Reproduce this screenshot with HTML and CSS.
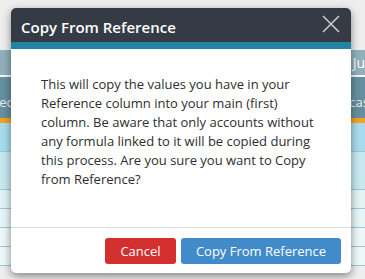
FILE: index.html
```html
<!DOCTYPE html>
<html lang="en">
<head>
    <meta charset="UTF-8">
    <meta name="viewport" content="width=device-width, initial-scale=1.0">
    <title>Copy From Reference</title>
    <link rel="stylesheet" href="styles.css">
</head>
<body>
    <div class="page">
        <div class="top-space"></div>
        <div class="grid-head">
            <span class="head-left"></span>
            <span class="head-right">Ju</span>
        </div>
        <div class="grid-sub">
            <span class="sub-left">rec</span>
            <span class="sub-right">cas</span>
        </div>
        <div class="orange-bar"></div>
        <div class="grid-row row-1"></div>
        <div class="grid-row row-2"></div>
        <div class="grid-row row-3"></div>
        <div class="grid-row row-4"></div>
        <div class="grid-row row-5"></div>
        <div class="grid-row row-6"></div>
    </div>

    <div class="modal">
        <div class="modal-header">
            <h2 class="modal-title">Copy From Reference</h2>
            <button class="modal-close" aria-label="Close">
                <svg width="18" height="18" viewBox="0 0 18 18">
                    <path d="M1 1 L17 17 M17 1 L1 17" stroke="#c9ccd1" stroke-width="1.6" fill="none"/>
                </svg>
            </button>
        </div>
        <div class="modal-stripe"></div>
        <div class="modal-body">
            <p>This will copy the values you have in your Reference column into your main (first) column. Be aware that only accounts without any formula linked to it will be copied during this process. Are you sure you want to Copy from Reference?</p>
        </div>
        <div class="modal-footer">
            <button class="btn btn-cancel">Cancel</button>
            <button class="btn btn-copy">Copy From Reference</button>
        </div>
    </div>
</body>
</html>
```

FILE: styles.css
```css
body {
    margin: 0;
    font-family: "Open Sans", Arial, sans-serif;
    background-color: #eeeeee;
    width: 365px;
    height: 279px;
    overflow: hidden;
    position: relative;
}

.page {
    display: flex;
    flex-direction: column;
}

.top-space {
    height: 50px;
    background-color: #eeeeee;
}

.grid-head {
    height: 25px;
    background-color: #8fb0bc;
    border-bottom: 2px solid #f4f6f7;
    display: flex;
    justify-content: space-between;
    align-items: center;
    color: #ffffff;
    font-size: 14px;
}

.head-right {
    padding-right: 0;
}

.grid-sub {
    height: 41px;
    background-color: #66909f;
    display: flex;
    justify-content: space-between;
    align-items: flex-end;
    padding-bottom: 7px;
    box-sizing: border-box;
    color: #e6eef1;
    font-size: 13px;
}

.sub-left {
    margin-left: -6px;
}

.sub-right {
    margin-right: -4px;
}

.orange-bar {
    height: 5px;
    background-color: #f2a31f;
}

.grid-row {
    height: 18px;
    border-bottom: 1px solid #9cc6d4;
}

.row-1 {
    height: 28px;
    background-color: #a9dbee;
}

.row-2 {
    height: 37px;
    background-color: #c8e8f0;
}

.row-3 {
    background-color: #e2f3f6;
}

.row-4 {
    background-color: #e8f5f7;
}

.row-5 {
    background-color: #edf7f8;
}

.row-6 {
    background-color: #eef8f8;
}

.modal {
    position: absolute;
    left: 11px;
    top: 8px;
    width: 340px;
    height: 265px;
    background-color: #ffffff;
    border-radius: 5px;
    box-shadow: 0 3px 8px rgba(0, 0, 0, 0.45);
    display: flex;
    flex-direction: column;
    overflow: hidden;
}

.modal-header {
    height: 34px;
    background-color: #353b45;
    display: flex;
    align-items: center;
    justify-content: space-between;
    padding: 0 10px 0 10px;
}

.modal-title {
    margin: 0;
    color: #ffffff;
    font-size: 15px;
    font-weight: 600;
    padding-top: 4px;
}

.modal-close {
    background: none;
    border: none;
    padding: 0;
    width: 18px;
    height: 18px;
    margin-top: -3px;
    margin-right: 1px;
    cursor: pointer;
}

.modal-stripe {
    height: 7px;
    background-color: #2383a3;
}

.modal-body {
    flex: 1;
    padding: 26px 24px 0 30px;
    border-bottom: 1px solid #dcdcdc;
}

.modal-body p {
    margin: 0;
    font-size: 13px;
    line-height: 19px;
    color: #2e2e2e;
}

.modal-footer {
    height: 45px;
    display: flex;
    justify-content: flex-end;
    align-items: flex-start;
    gap: 5px;
    padding: 10px 10px 0 0;
    box-sizing: border-box;
}

.btn {
    height: 26px;
    border: none;
    border-radius: 3px;
    color: #ffffff;
    font-family: "Open Sans", Arial, sans-serif;
    font-size: 13px;
    cursor: pointer;
}

.btn-cancel {
    width: 71px;
    background-color: #d32f2f;
}

.btn-copy {
    width: 160px;
    background-color: #418bcb;
}
```
